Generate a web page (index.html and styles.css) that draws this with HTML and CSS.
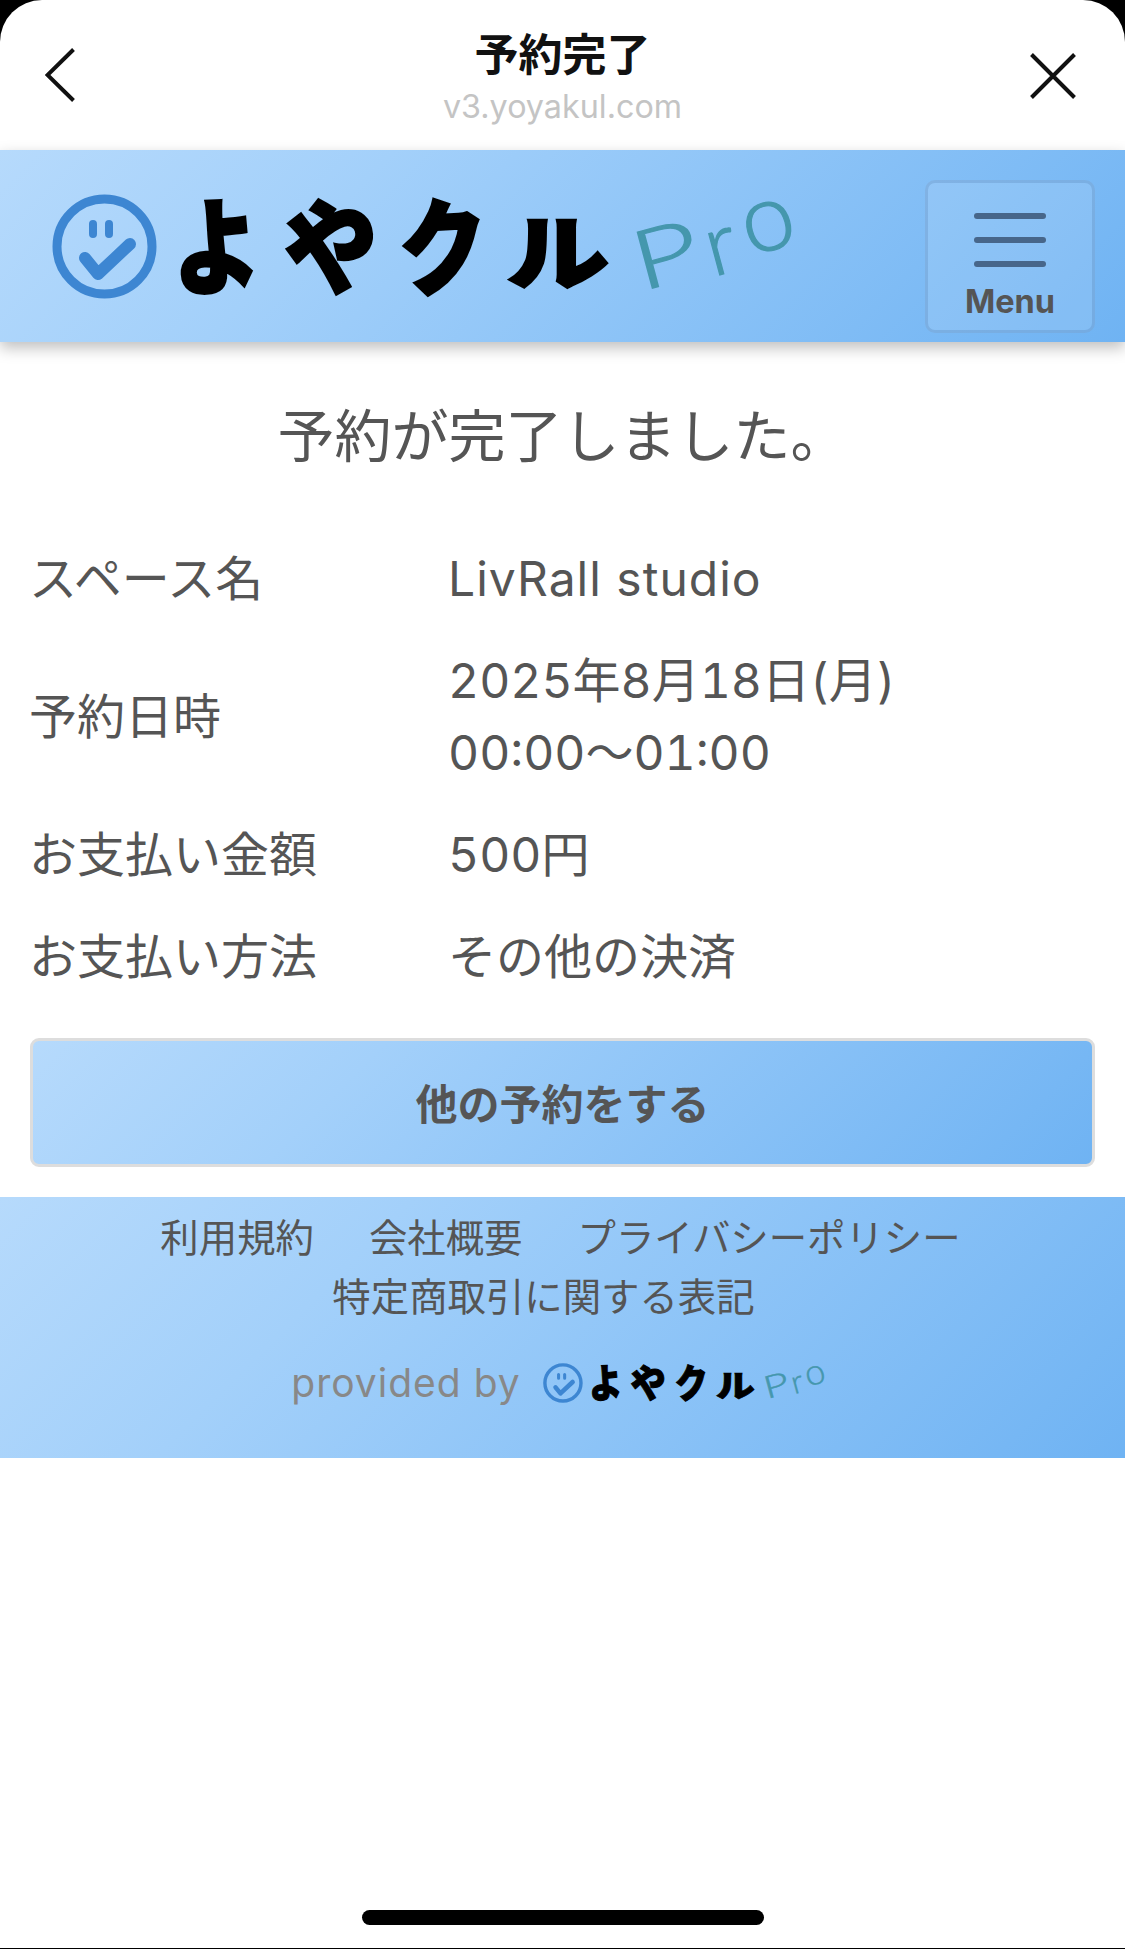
FILE: index.html
```html
<!DOCTYPE html>
<html lang="ja">
<head>
<meta charset="utf-8">
<title>予約完了</title>
<link rel="stylesheet" href="styles.css">
</head>
<body>
<div class="screen">
  <div class="sheet">
    <div class="topbar">
      <svg class="nav-icon" width="30" height="54" viewBox="0 0 30 54"><path d="M28.5 1.5 2.5 27l26 25.5" fill="none" stroke="#111" stroke-width="4"/></svg>
      <div class="topbar-title">
        <div class="title">予約完了</div>
        <div class="domain">v3.yoyakul.com</div>
      </div>
      <svg class="nav-icon nav-close" width="46" height="46" viewBox="0 0 46 46"><path d="M1.5 1.5 44.500 44.500M44.500 1.500 1.500 44.500" fill="none" stroke="#111" stroke-width="4"/></svg>
    </div>

    <header class="header gradient">
      <div class="logo logo-large">
        <svg class="logo-mark" viewBox="0 0 105 105"><circle cx="52.500" cy="52.500" r="47.500" fill="none" stroke="#3d86d2" stroke-width="9"/><path d="M41 30v10M57 30v10" fill="none" stroke="#3d86d2" stroke-width="8" stroke-linecap="round"/><path d="M33 64 46 80 78 50" fill="none" stroke="#3d86d2" stroke-width="12" stroke-linecap="round" stroke-linejoin="round"/></svg>
        <span class="kana kana-yo">よ</span><span class="kana kana-ya">や</span><span class="kana kana-ku">ク</span><span class="kana kana-ru">ル</span>
        <span class="pro"><span class="pro-p">P</span><span class="pro-r">r</span><span class="pro-o">o</span></span>
      </div>
      <button class="menu-button" type="button">
        <span class="menu-bars"><span></span><span></span><span></span></span>
        <span class="menu-label">Menu</span>
      </button>
    </header>

    <main class="content">
      <h1 class="heading">予約が完了しました。</h1>
      <dl class="details">
        <dt>スペース名</dt><dd class="latin">LivRall studio</dd>
        <dt>予約日時</dt><dd class="numeric">2025年8月18日(月)<br>00:00～01:00</dd>
        <dt>お支払い金額</dt><dd class="numeric">500円</dd>
        <dt>お支払い方法</dt><dd>その他の決済</dd>
      </dl>
      <a class="action gradient">他の予約をする</a>
    </main>

    <footer class="footer gradient">
      <div class="links links-first"><a>利用規約</a><a>会社概要</a><a>プライバシーポリシー</a></div>
      <div class="links links-second"><a>特定商取引に関する表記</a></div>
      <div class="provided">
        <span class="provided-text">provided by</span>
        <div class="logo logo-small">
          <svg class="logo-mark" viewBox="0 0 105 105"><circle cx="52.500" cy="52.500" r="47.500" fill="none" stroke="#3d86d2" stroke-width="9"/><path d="M41 30v10M57 30v10" fill="none" stroke="#3d86d2" stroke-width="8" stroke-linecap="round"/><path d="M33 64 46 80 78 50" fill="none" stroke="#3d86d2" stroke-width="12" stroke-linecap="round" stroke-linejoin="round"/></svg>
          <span class="kana kana-yo">よ</span><span class="kana kana-ya">や</span><span class="kana kana-ku">ク</span><span class="kana kana-ru">ル</span>
          <span class="pro"><span class="pro-p">P</span><span class="pro-r">r</span><span class="pro-o">o</span></span>
        </div>
      </div>
    </footer>

    <div class="home-indicator"></div>
  </div>
</div>
</body>
</html>
```
FILE: styles.css
```css
* { box-sizing: border-box; }
html, body { margin: 0; padding: 0; }
body {
  font-family: Inter, "Noto Sans CJK JP", sans-serif;
  color: #555;
  background: #000;
}
.screen { width: 1125px; height: 1949px; background: #000; }
.sheet {
  height: 1948px;
  background: #fff;
  border-radius: 42px 42px 0 0;
  display: flex;
  flex-direction: column;
  overflow: hidden;
}
.gradient { background: linear-gradient(135deg, #b6dafc 0%, #a3d0fa 30%, #6fb3f3 100%); }

.topbar {
  height: 150px;
  display: grid;
  grid-template-columns: 1fr auto 1fr;
  align-items: start;
  padding: 0 49px 0 45px;
  flex: none;
}
.nav-icon { display: block; margin-top: 48px; }
.nav-close { margin-top: 53px; justify-self: end; }
.topbar-title { padding: 31px 0 0 4px; text-align: center; }
.title { font-size: 44px; line-height: 48px; font-weight: 700; color: #111; }
.domain { font-size: 32.300px; line-height: 40px; margin-top: 8px; color: #c4c4c4; }

.header {
  height: 192px;
  flex: none;
  display: flex;
  justify-content: space-between;
  align-items: center;
  padding: 0 30px 0 52px;
  box-shadow: 0 6px 14px rgba(0, 0, 0, .25);
  position: relative;
}

.logo { display: flex; align-items: center; line-height: 1; }
.logo-large { font-size: 100px; }
.logo-small { font-size: 38px; }
.logo-mark { width: 1.05em; height: 1.05em; flex: none; display: block; }
.kana {
  display: block;
  flex: none;
  text-align: center;
  font-family: "Noto Sans CJK JP", sans-serif;
  font-weight: 900;
  color: #000;
  -webkit-text-stroke: .025em #000;
  font-size: 1.05em;
  line-height: 1;
}
.kana-yo { width: 1.124em; transform: translateY(-.06em) rotate(-3deg) scaleX(.84); }
.kana-ya { width: 1.066em; transform: translateY(-.05em) rotate(-14deg) scaleX(.9); }
.kana-ku { width: 1.066em; transform: translateY(-.05em) rotate(-3deg) scaleX(.84); }
.kana-ru { width: 1.124em; transform: translateY(.01em) scale(.98, .78); }
.pro {
  display: flex;
  align-items: center;
  flex: none;
  margin-left: .18em;
  font-family: Lato, sans-serif;
  font-weight: 300;
  color: #4597ad;
  -webkit-text-stroke: .012em #4597ad;
  line-height: 1;
  height: 1em;
}
.pro-p, .pro-r, .pro-o { display: block; }
.pro-p { font-size: .82em; transform: translateY(.07em) rotate(-15deg) scaleX(1.4); margin-left: .08em; }
.pro-r { font-size: .86em; margin-left: .18em; transform: translateY(-.06em) rotate(-15deg); }
.pro-o { font-size: .95em; margin-left: .04em; transform: translateY(-.34em) rotate(-15deg); }

.menu-button {
  width: 170px;
  height: 153px;
  margin-top: 20px;
  padding: 30px 0 0;
  border: 3px solid rgba(70, 110, 160, .22);
  border-radius: 10px;
  background: rgba(255, 255, 255, .12);
  display: flex;
  flex-direction: column;
  align-items: center;
  font-family: Inter, sans-serif;
}
.menu-bars { display: flex; flex-direction: column; gap: 18px; }
.menu-bars span { display: block; width: 72px; height: 6px; border-radius: 3px; background: #47668a; }
.menu-label { font-size: 32.500px; line-height: 36px; margin-top: 17px; font-weight: 700; color: #555; }

.content { flex: none; padding: 0 30px; }
.heading {
  margin: 54px 0 66px;
  text-align: center;
  font-size: 57px;
  line-height: 81px;
  font-weight: 400;
}
.details {
  margin: 0 0 0 -1px;
  display: grid;
  grid-template-columns: 419px 1fr;
  row-gap: 30px;
  align-items: center;
  font-size: 48px;
  line-height: 72px;
}
.details dt, .details dd { margin: 0; }
.details .latin { letter-spacing: 1px; }
.details .numeric { font-variant-numeric: tabular-nums; }
.action {
  display: flex;
  align-items: center;
  justify-content: center;
  height: 129px;
  margin-top: 45px;
  padding-bottom: 3px;
  border: 3px solid #ddd;
  border-radius: 9px;
  font-size: 42px;
  font-weight: 700;
}

.footer { height: 261px; margin-top: 30px; padding-top: 12px; flex: none; }
.links { display: flex; justify-content: center; font-size: 38.400px; line-height: 58.500px; }
.links-first { gap: 55px; padding-right: 4px; }
.links-second { padding-right: 38px; }
.provided {
  display: flex;
  align-items: center;
  justify-content: center;
  gap: 22px;
  margin-top: 30px;
  padding-right: 10px;
}
.provided-text { font-size: 39px; line-height: 54px; letter-spacing: 1px; color: #888; }

.home-indicator {
  width: 402px;
  height: 15px;
  margin: auto auto 23px;
  border-radius: 8px;
  background: #000;
  flex: none;
}
```
